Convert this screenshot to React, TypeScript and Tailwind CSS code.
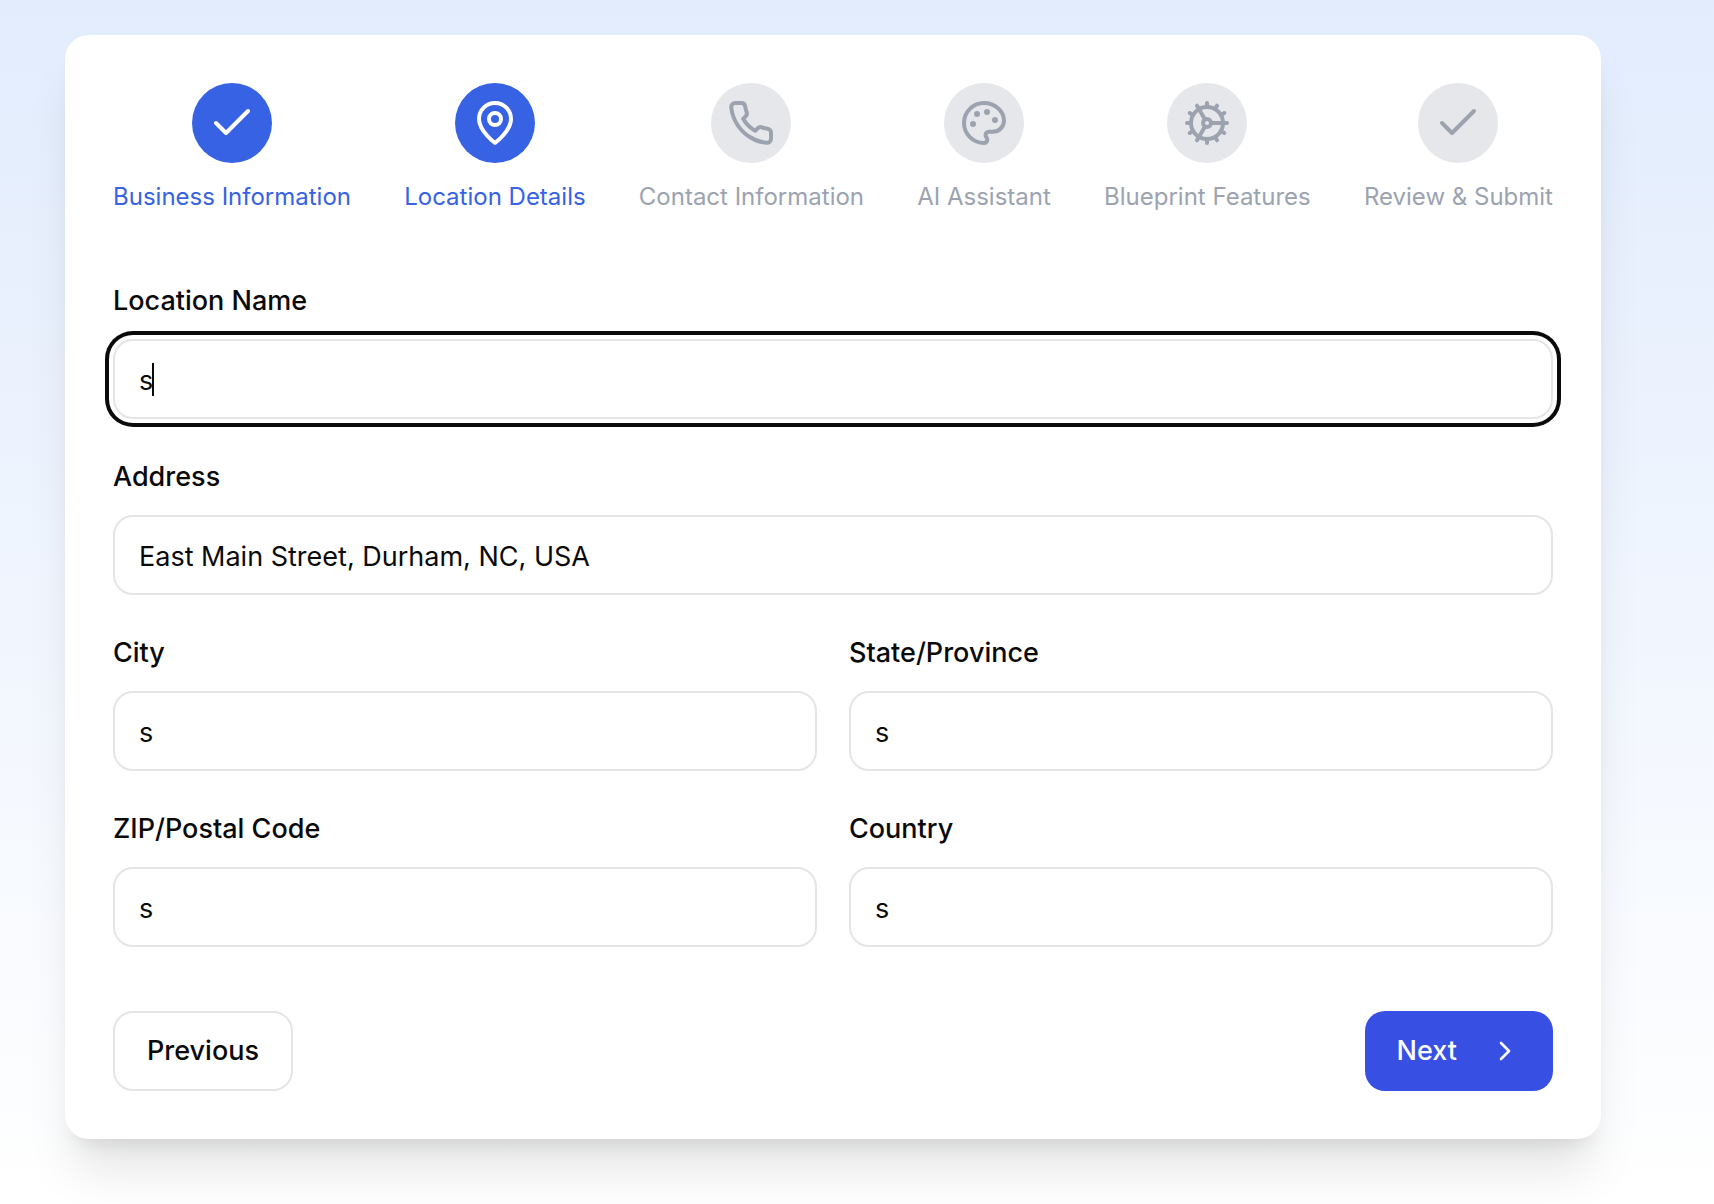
import React from "react";

type IconProps = { className?: string };

function Icon({ children, className = "size-12" }: { children: React.ReactNode; className?: string }) {
  return (
    <svg
      className={className}
      viewBox="0 0 24 24"
      fill="none"
      stroke="currentColor"
      strokeWidth={2}
      strokeLinecap="round"
      strokeLinejoin="round"
      aria-hidden="true"
    >
      {children}
    </svg>
  );
}

const CheckIcon = (p: IconProps) => (
  <Icon {...p}>
    <path d="M20 6 9 17l-5-5" />
  </Icon>
);

const PinIcon = (p: IconProps) => (
  <Icon {...p}>
    <path d="M20 10c0 6-8 12-8 12s-8-6-8-12a8 8 0 0 1 16 0Z" />
    <circle cx="12" cy="10" r="3" />
  </Icon>
);

const PhoneIcon = (p: IconProps) => (
  <Icon {...p}>
    <path d="M22 16.92v3a2 2 0 0 1-2.18 2 19.79 19.79 0 0 1-8.63-3.07 19.5 19.5 0 0 1-6-6 19.79 19.79 0 0 1-3.07-8.67A2 2 0 0 1 4.11 2h3a2 2 0 0 1 2 1.72 12.84 12.84 0 0 0 .7 2.81 2 2 0 0 1-.45 2.11L8.09 9.91a16 16 0 0 0 6 6l1.27-1.27a2 2 0 0 1 2.11-.45 12.84 12.84 0 0 0 2.81.7A2 2 0 0 1 22 16.92z" />
  </Icon>
);

const PaletteIcon = (p: IconProps) => (
  <Icon {...p}>
    <g fill="currentColor" stroke="none">
      <circle cx="13.5" cy="6.5" r="1.5" />
      <circle cx="17.5" cy="10.5" r="1.5" />
      <circle cx="8.5" cy="7.5" r="1.5" />
      <circle cx="6.5" cy="12.5" r="1.5" />
    </g>
    <path d="M12 2C6.5 2 2 6.5 2 12s4.5 10 10 10c.926 0 1.648-.746 1.648-1.688 0-.437-.18-.835-.437-1.125-.29-.289-.438-.652-.438-1.125a1.64 1.64 0 0 1 1.668-1.668h1.996c3.051 0 5.555-2.503 5.555-5.554C21.965 6.012 17.461 2 12 2z" />
  </Icon>
);

const CogIcon = (p: IconProps) => (
  <Icon {...p}>
    <path d="M12 20a8 8 0 1 0 0-16 8 8 0 0 0 0 16Z" />
    <path d="M12 14a2 2 0 1 0 0-4 2 2 0 0 0 0 4Z" />
    <path d="M12 2v2" />
    <path d="M12 22v-2" />
    <path d="m17 20.66-1-1.73" />
    <path d="M11 10.27 7 3.34" />
    <path d="m20.66 17-1.73-1" />
    <path d="m3.34 7 1.73 1" />
    <path d="M14 12h8" />
    <path d="M2 12h2" />
    <path d="m20.66 7-1.73 1" />
    <path d="m3.34 17 1.73-1" />
    <path d="m17 3.34-1 1.73" />
    <path d="m11 13.73-4 6.93" />
  </Icon>
);

const ChevronIcon = (p: IconProps) => (
  <Icon {...p}>
    <path d="m9 18 6-6-6-6" />
  </Icon>
);

const steps = [
  { label: "Business Information", icon: CheckIcon, active: true },
  { label: "Location Details", icon: PinIcon, active: true },
  { label: "Contact Information", icon: PhoneIcon, active: false },
  { label: "AI Assistant", icon: PaletteIcon, active: false },
  { label: "Blueprint Features", icon: CogIcon, active: false },
  { label: "Review & Submit", icon: CheckIcon, active: false },
];

function Stepper() {
  return (
    <ol className="mb-[60px] flex justify-between">
      {steps.map(({ label, icon: StepIcon, active }) => (
        <li
          key={label}
          className={`flex flex-col items-center ${active ? "text-[#3662e3]" : "text-[#9ca3af]"}`}
        >
          <span
            className={`flex size-20 items-center justify-center rounded-full ${
              active ? "bg-[#3662e3] text-white" : "bg-[#e5e7eb] text-[#9ca3af]"
            }`}
          >
            <StepIcon />
          </span>
          <span className="mt-4 text-2xl leading-9 whitespace-nowrap">{label}</span>
        </li>
      ))}
    </ol>
  );
}

type FieldProps = { id: string; label: string; value: string; focused?: boolean };

function Field({ id, label, value, focused = false }: FieldProps) {
  return (
    <div className="flex flex-col gap-3">
      <label htmlFor={id} className="text-[27px] leading-13 font-medium">
        {label}
      </label>
      <div className="relative">
        <input
          id={id}
          type="text"
          defaultValue={value}
          className={`block h-20 w-full rounded-[20px] border-2 border-[#e5e5e5] bg-white px-6 pt-0.5 text-[27px] leading-10 outline-none ${
            focused ? "ring-4 ring-[#0a0a0a] ring-offset-4 ring-offset-white" : ""
          }`}
        />
        {focused && <span className="absolute top-6 left-[39px] h-[33px] w-0.5 bg-[#0a0a0a]" />}
      </div>
    </div>
  );
}

export default function App() {
  return (
    <main className="min-h-screen bg-linear-to-b from-[#e2ecfd] to-white pt-[35px] pr-[113px] pb-16 pl-[65px] font-['Inter',sans-serif] text-[#0a0a0a]">
      <form
        className="rounded-3xl bg-white p-12 shadow-[0_40px_50px_-10px_rgba(0,0,0,0.1),0_16px_20px_-12px_rgba(0,0,0,0.1)]"
        onSubmit={(e) => e.preventDefault()}
      >
        <Stepper />
        <div className="flex flex-col gap-8">
          <Field id="location-name" label="Location Name" value="s" focused />
          <Field id="address" label="Address" value="East Main Street, Durham, NC, USA" />
          <div className="grid grid-cols-2 gap-8">
            <Field id="city" label="City" value="s" />
            <Field id="state" label="State/Province" value="s" />
            <Field id="zip" label="ZIP/Postal Code" value="s" />
            <Field id="country" label="Country" value="s" />
          </div>
        </div>
        <div className="mt-16 flex justify-between">
          <button
            type="button"
            className="h-20 rounded-[20px] border-2 border-[#e5e5e5] bg-white px-8 text-[27px] leading-10 font-medium"
          >
            Previous
          </button>
          <button
            type="submit"
            className="flex h-20 items-center gap-8 rounded-[20px] bg-[#384fe3] px-8 text-[27px] leading-10 font-medium text-[#fafafa]"
          >
            Next
            <ChevronIcon className="size-8" />
          </button>
        </div>
      </form>
    </main>
  );
}
